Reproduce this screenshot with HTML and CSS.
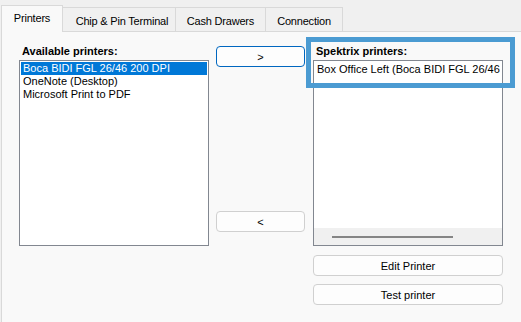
FILE: index.html
```html
<!DOCTYPE html>
<html lang="en">
<head>
    <meta charset="UTF-8">
    <title>Printer settings</title>
    <link rel="stylesheet" href="styles.css">
</head>
<body>

    <!-- Tab strip -->
    <div class="tabs">
        <div class="tab active">Printers</div>
        <div class="tab tab-chip">Chip &amp; Pin Terminal</div>
        <div class="tab tab-cash">Cash Drawers</div>
        <div class="tab tab-conn">Connection</div>
    </div>

    <!-- Printers page -->
    <div class="panel">
        <div class="column">
            <div class="label">Available printers:</div>
            <div class="listbox">
                <div class="item selected">Boca BIDI FGL 26/46 200 DPI</div>
                <div class="item">OneNote (Desktop)</div>
                <div class="item">Microsoft Print to PDF</div>
            </div>
        </div>

        <div class="middle">
            <button class="btn focused">&gt;</button>
            <button class="btn">&lt;</button>
        </div>

        <div class="column">
            <div class="label">Spektrix printers:</div>
            <div class="listbox with-scroll">
                <div class="items">
                    <div class="item">Box Office Left (Boca BIDI FGL 26/46 200 DPI)</div>
                </div>
                <div class="hscroll"><span class="thumb"></span></div>
            </div>
            <button class="btn wide first">Edit Printer</button>
            <button class="btn wide">Test printer</button>
        </div>
    </div>

    <!-- Highlight frame drawn over the screenshot -->
    <div class="highlight"></div>

</body>
</html>
```

FILE: styles.css
```css
body {
    margin: 0;
    width: 521px;
    height: 322px;
    overflow: hidden;
    background: #f0f0f0;
    font-family: "Liberation Sans", Arial, sans-serif;
    font-size: 11px;
    color: #000;
    position: relative;
}

/* Tabs */
.tabs {
    display: flex;
    align-items: flex-end;
    height: 31px;
    padding-left: 1px;
}

.tab {
    height: 24px;
    box-sizing: border-box;
    border: 1px solid #d9d9d9;
    border-bottom: none;
    border-left: none;
    background: #f0f0f0;
    display: flex;
    justify-content: center;
    align-items: center;
    padding-top: 2px;
    letter-spacing: -0.2px;
}

.tab.active {
    width: 62px;
    height: 27px;
    margin-bottom: -1px;
    border-left: 1px solid #d9d9d9;
    background: #f9f9f9;
    padding-top: 0;
    padding-bottom: 2px;
    position: relative;
    z-index: 1;
}

.tab-chip { width: 113px; padding-left: 6px; }
.tab-cash { width: 90px; }
.tab-conn { width: 77px; }

/* Page */
.panel {
    margin-left: 1px;
    height: 291px;
    box-sizing: border-box;
    border-top: 1px solid #d9d9d9;
    border-left: 1px solid #d9d9d9;
    background: #f9f9f9;
    padding: 13px 0 0 17px;
    display: grid;
    grid-template-columns: 190px 89px 191px;
    column-gap: 7px;
    align-items: start;
}

.column {
    display: flex;
    flex-direction: column;
}

.column:last-child {
    margin-left: 1px;
}

.label {
    font-weight: bold;
    height: 13px;
    line-height: 13px;
    margin: 0 0 2px 3px;
}

.listbox {
    height: 186px;
    box-sizing: border-box;
    border: 1px solid #828790;
    background: #fff;
    padding: 1px;
    overflow: hidden;
}

.item {
    height: 13px;
    line-height: 13px;
    padding-left: 2px;
    white-space: nowrap;
}

.item.selected {
    background: #0078d7;
    color: #fff;
}

.with-scroll {
    display: flex;
    flex-direction: column;
    padding: 0;
}

.with-scroll .items {
    flex: 1;
    padding: 2px 0 0 1px;
    overflow: hidden;
}

.hscroll {
    height: 17px;
    background: #f0f0f0;
    display: flex;
    align-items: center;
    padding-left: 18px;
}

.thumb {
    display: block;
    width: 121px;
    height: 2px;
    background: #858585;
}

/* Buttons */
.middle {
    height: 187px;
    padding-top: 1px;
    box-sizing: border-box;
    display: flex;
    flex-direction: column;
    justify-content: space-between;
}

.btn {
    height: 21px;
    box-sizing: border-box;
    border: 1px solid #d0d0d0;
    border-radius: 4px;
    background: #fdfdfd;
    font-family: inherit;
    font-size: 11px;
    color: #000;
    padding: 0;
}

.btn.focused {
    border-color: #0067c0;
}

.btn.wide {
    width: 190px;
    margin-top: 8px;
}

.btn.wide.first {
    margin-top: 9px;
}

/* Annotation frame */
.highlight {
    position: absolute;
    left: 306px;
    top: 37px;
    width: 209px;
    height: 51px;
    box-sizing: border-box;
    border: 5px solid #4b9bd2;
}
```
